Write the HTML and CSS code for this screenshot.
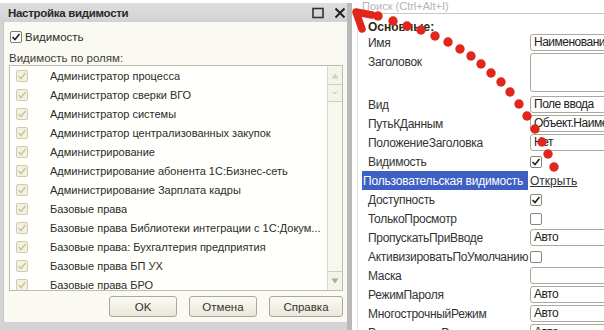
FILE: index.html
```html
<!DOCTYPE html>
<html lang="ru">
<head>
<meta charset="utf-8">
<link rel="stylesheet" href="styles.css">
</head>
<body>
<div class="screen">
  <div class="dialog">
    <div class="titlebar">
      <span class="title">Настройка видимости</span>
      <span class="tb-icons">
        <svg class="tb-ico" width="12" height="12" viewBox="0 0 12 12"><rect x="1" y="1.5" width="10" height="9" fill="none" stroke="#333" stroke-width="1.6"/></svg>
        <svg class="tb-ico" width="12" height="12" viewBox="0 0 12 12"><path d="M1.5 1.5 L10.5 10.5 M10.5 1.5 L1.5 10.5" stroke="#222" stroke-width="2"/></svg>
      </span>
    </div>
    <div class="dbody">
      <div class="chk-row">
        <span class="cb on"><svg width="10" height="10" viewBox="0 0 10 10"><path d="M1.5 5 L4 7.5 L8.5 2" fill="none" stroke="#222" stroke-width="1.6"/></svg></span>
        <span>Видимость</span>
      </div>
      <div class="caption">Видимость по ролям:</div>
      <div class="listbox">
        <div class="rows">
          <div class="row"><span class="cb dis"><svg width="10" height="10" viewBox="0 0 10 10"><path d="M1.5 5 L4 7.5 L8.5 2" fill="none" stroke="#cdc7a0" stroke-width="1.6"/></svg></span><span class="rt">Администратор процесса</span></div>
          <div class="row"><span class="cb dis"><svg width="10" height="10" viewBox="0 0 10 10"><path d="M1.5 5 L4 7.5 L8.5 2" fill="none" stroke="#cdc7a0" stroke-width="1.6"/></svg></span><span class="rt">Администратор сверки ВГО</span></div>
          <div class="row"><span class="cb dis"><svg width="10" height="10" viewBox="0 0 10 10"><path d="M1.5 5 L4 7.5 L8.5 2" fill="none" stroke="#cdc7a0" stroke-width="1.6"/></svg></span><span class="rt">Администратор системы</span></div>
          <div class="row"><span class="cb dis"><svg width="10" height="10" viewBox="0 0 10 10"><path d="M1.5 5 L4 7.5 L8.5 2" fill="none" stroke="#cdc7a0" stroke-width="1.6"/></svg></span><span class="rt">Администратор централизованных закупок</span></div>
          <div class="row"><span class="cb dis"><svg width="10" height="10" viewBox="0 0 10 10"><path d="M1.5 5 L4 7.5 L8.5 2" fill="none" stroke="#cdc7a0" stroke-width="1.6"/></svg></span><span class="rt">Администрирование</span></div>
          <div class="row"><span class="cb dis"><svg width="10" height="10" viewBox="0 0 10 10"><path d="M1.5 5 L4 7.5 L8.5 2" fill="none" stroke="#cdc7a0" stroke-width="1.6"/></svg></span><span class="rt">Администрирование абонента 1С:Бизнес-сеть</span></div>
          <div class="row"><span class="cb dis"><svg width="10" height="10" viewBox="0 0 10 10"><path d="M1.5 5 L4 7.5 L8.5 2" fill="none" stroke="#cdc7a0" stroke-width="1.6"/></svg></span><span class="rt">Администрирование Зарплата кадры</span></div>
          <div class="row"><span class="cb dis"><svg width="10" height="10" viewBox="0 0 10 10"><path d="M1.5 5 L4 7.5 L8.5 2" fill="none" stroke="#cdc7a0" stroke-width="1.6"/></svg></span><span class="rt">Базовые права</span></div>
          <div class="row"><span class="cb dis"><svg width="10" height="10" viewBox="0 0 10 10"><path d="M1.5 5 L4 7.5 L8.5 2" fill="none" stroke="#cdc7a0" stroke-width="1.6"/></svg></span><span class="rt">Базовые права Библиотеки интеграции с 1С:Докум...</span></div>
          <div class="row"><span class="cb dis"><svg width="10" height="10" viewBox="0 0 10 10"><path d="M1.5 5 L4 7.5 L8.5 2" fill="none" stroke="#cdc7a0" stroke-width="1.6"/></svg></span><span class="rt">Базовые права: Бухгалтерия предприятия</span></div>
          <div class="row"><span class="cb dis"><svg width="10" height="10" viewBox="0 0 10 10"><path d="M1.5 5 L4 7.5 L8.5 2" fill="none" stroke="#cdc7a0" stroke-width="1.6"/></svg></span><span class="rt">Базовые права БП УХ</span></div>
          <div class="row"><span class="cb dis"><svg width="10" height="10" viewBox="0 0 10 10"><path d="M1.5 5 L4 7.5 L8.5 2" fill="none" stroke="#cdc7a0" stroke-width="1.6"/></svg></span><span class="rt">Базовые права БРО</span></div>
        </div>
        <div class="scrollbar">
          <div class="sb-btn"><svg width="8" height="6" viewBox="0 0 8 6"><path d="M4 0.5 L7.5 5.5 L0.5 5.5 Z" fill="#cfcfc4"/></svg></div>
          <div class="sb-thumb"><svg width="6" height="4" viewBox="0 0 6 4"><path d="M0 1 L6 1 L3 3.5 Z" fill="#d6d6cc"/></svg></div>
          <div class="sb-track"></div>
          <div class="sb-btn"><svg width="8" height="6" viewBox="0 0 8 6"><path d="M0.5 0.5 L7.5 0.5 L4 5.5 Z" fill="#a9a9a0"/></svg></div>
        </div>
      </div>
      <div class="buttons">
        <div class="btn w68">OK</div>
        <div class="btn w68">Отмена</div>
        <div class="btn w74">Справка</div>
      </div>
    </div>
  </div>

  <div class="props">
    <div class="search">Поиск (Ctrl+Alt+I)</div>
    <div class="grid">
      <div class="lbl group">Основные:</div><div class="val"></div>
      <div class="lbl">Имя</div><div class="val"><div class="inp">Наименование</div></div>
      <div class="lbl top">Заголовок</div><div class="val top"><div class="inp area"></div></div>
      <div class="lbl">Вид</div><div class="val"><div class="inp">Поле ввода</div></div>
      <div class="lbl">ПутьКДанным</div><div class="val"><div class="inp">Объект.Наименование</div></div>
      <div class="lbl">ПоложениеЗаголовка</div><div class="val"><div class="inp">Нет</div></div>
      <div class="lbl">Видимость</div><div class="val"><span class="cb2"><svg width="10" height="10" viewBox="0 0 10 10"><path d="M1.5 5 L4 7.5 L8.5 2" fill="none" stroke="#222" stroke-width="1.6"/></svg></span></div>
      <div class="lbl sel">Пользовательская видимость</div><div class="val"><span class="link">Открыть</span></div>
      <div class="lbl">Доступность</div><div class="val"><span class="cb2"><svg width="10" height="10" viewBox="0 0 10 10"><path d="M1.5 5 L4 7.5 L8.5 2" fill="none" stroke="#222" stroke-width="1.6"/></svg></span></div>
      <div class="lbl">ТолькоПросмотр</div><div class="val"><span class="cb2"></span></div>
      <div class="lbl">ПропускатьПриВводе</div><div class="val"><div class="inp">Авто</div></div>
      <div class="lbl">АктивизироватьПоУмолчанию</div><div class="val"><span class="cb2"></span></div>
      <div class="lbl">Маска</div><div class="val"><div class="inp"></div></div>
      <div class="lbl">РежимПароля</div><div class="val"><div class="inp">Авто</div></div>
      <div class="lbl">МногострочныйРежим</div><div class="val"><div class="inp">Авто</div></div>
      <div class="lbl">РасширенноеРедактирование</div><div class="val"><div class="inp">Авто</div></div>
    </div>
  </div>

  <svg class="arrow" width="604" height="330" viewBox="0 0 604 330">
    <g fill="#e1261c">
      <circle cx="378" cy="16" r="4.7"/>
      <circle cx="393" cy="21" r="4.7"/>
      <circle cx="407" cy="26" r="4.7"/>
      <circle cx="421" cy="30" r="4.7"/>
      <circle cx="435" cy="36" r="4.7"/>
      <circle cx="448" cy="42" r="4.7"/>
      <circle cx="460" cy="49" r="4.7"/>
      <circle cx="471" cy="56" r="4.7"/>
      <circle cx="481" cy="64" r="4.7"/>
      <circle cx="491" cy="73" r="4.7"/>
      <circle cx="501" cy="82" r="4.7"/>
      <circle cx="510" cy="92" r="4.7"/>
      <circle cx="519" cy="104" r="4.7"/>
      <circle cx="527" cy="116" r="4.7"/>
      <circle cx="535" cy="129" r="4.7"/>
      <circle cx="542" cy="142" r="4.7"/>
      <circle cx="548" cy="154" r="4.7"/>
      <circle cx="554" cy="167" r="4.7"/>
    </g>
    <polyline points="372,15 356,12 362,29" fill="none" stroke="#e1261c" stroke-width="7.5" stroke-linejoin="round" stroke-linecap="round"/>
  </svg>
</div>
</body>
</html>
```

FILE: styles.css
```css
* { box-sizing: border-box; }
html, body { margin: 0; padding: 0; }
body {
  width: 604px;
  height: 330px;
  overflow: hidden;
  background: #ffffff;
  font-family: "Liberation Sans", Arial, sans-serif;
  font-size: 12px;
  color: #333;
}
.screen {
  position: relative;
  width: 604px;
  height: 330px;
  display: flex;
  overflow: hidden;
}

/* ---------- dialog ---------- */
.dialog {
  flex: 0 0 352px;
  height: 327px;
  margin-top: 3px;
  background: #d4d4d4;
  border-right: 5px solid #b9b9b9;
  display: flex;
  flex-direction: column;
  padding-left: 3px;
  font-size: 11px;
}
.titlebar {
  height: 19px;
  margin-left: -3px;
  padding-left: 8px;
  padding-top: 1px;
  display: flex;
  align-items: center;
  justify-content: space-between;
  background: linear-gradient(#dedede, #d2d2d2);
}
.title {
  font-weight: bold;
  font-size: 11.5px;
  letter-spacing: -0.3px;
  color: #2a2a2a;
}
.tb-icons {
  display: flex;
  gap: 10px;
  padding-right: 1px;
}
.tb-ico { display: block; }

.dbody {
  width: 344px;
  height: 300px;
  background: #fbfaf2;
  border-left: 1px solid #c4c4c4;
  padding: 0 4px 0 5px;
  display: flex;
  flex-direction: column;
}
.chk-row {
  margin-top: 8px;
  height: 14px;
  display: flex;
  align-items: center;
  gap: 3px;
  padding-left: 1px;
  color: #2c2c2c;
  font-size: 11.5px;
}
.cb {
  width: 12px;
  height: 12px;
  border-radius: 2px;
  display: flex;
  align-items: center;
  justify-content: center;
  flex: 0 0 12px;
}
.cb.on {
  border: 1px solid #7e7e74;
  background: #fff;
}
.cb.dis {
  border: 1px solid #cfcab0;
  background: #f3f1e2;
}
.caption {
  margin-top: 7px;
  height: 14px;
  line-height: 15px;
  color: #3c3c3c;
  font-size: 11.5px;
}
.listbox {
  height: 226px;
  border: 1px solid #bdbcae;
  background: #fffffb;
  display: flex;
  overflow: hidden;
}
.rows {
  flex: 1;
  min-width: 0;
  overflow: hidden;
}
.row {
  height: 19px;
  display: flex;
  align-items: center;
  padding-left: 6px;
  white-space: nowrap;
}
.rt {
  margin-left: 22px;
  color: #2c2c2c;
  overflow: hidden;
  text-overflow: ellipsis;
}
.scrollbar {
  width: 15px;
  flex: 0 0 15px;
  border-left: 1px solid #d8d7cc;
  background: #f7f6ef;
  display: flex;
  flex-direction: column;
  padding-top: 1px;
}
.sb-btn, .sb-thumb {
  height: 18px;
  display: flex;
  align-items: center;
  justify-content: center;
  border-bottom: 1px solid #cfcec4;
  background: #f4f3ea;
}
.sb-thumb { height: 17px; }
.sb-track { flex: 1; border-bottom: 1px solid #cfcec4; }
.sb-btn:last-child { border-bottom: none; }

.buttons {
  margin-top: 5px;
  height: 21px;
  display: flex;
  justify-content: flex-end;
  gap: 12px;
}
.btn {
  height: 21px;
  border: 1px solid #a9a89c;
  border-radius: 3px;
  background: linear-gradient(#fbfaf4, #e9e7da);
  display: flex;
  align-items: center;
  justify-content: center;
  color: #333;
  font-size: 11.5px;
}
.w68 { width: 68px; }
.w74 { width: 74px; }

/* ---------- properties panel ---------- */
.props {
  flex: 1;
  background: #ffffff;
  display: flex;
  flex-direction: column;
  padding-left: 5px;
}
.search {
  height: 16px;
  line-height: 13px;
  padding-left: 10px;
  color: #b4b4b4;
  border-bottom: 1px solid #c8c8bc;
  margin-left: -5px;
  font-size: 11px;
}
.grid {
  display: grid;
  grid-template-columns: 166px 1fr;
  grid-template-rows: 19px 19px 43px;
  grid-auto-rows: 19px;
  column-gap: 2px;
  border-left: 1px solid #e2e2da;
  padding-left: 4px;
  background: #fff;
}
.lbl {
  padding-left: 6px;
  display: flex;
  align-items: center;
  white-space: nowrap;
  color: #333;
  letter-spacing: -0.3px;
}
.lbl.group {
  font-weight: bold;
  color: #2c2a14;
  padding-top: 7px;
  letter-spacing: 0;
}
.lbl.sel {
  background: #3e5fc3;
  color: #fff;
  padding-left: 1px;
  letter-spacing: -0.2px;
}
.lbl.top { align-items: flex-start; padding-top: 3px; }
.val {
  display: flex;
  align-items: center;
  overflow: visible;
  white-space: nowrap;
}
.val.top { align-items: flex-start; padding-top: 1px; }
.inp {
  width: 110px;
  height: 17px;
  border: 1px solid #aaa99c;
  border-radius: 3px;
  background: #fff;
  padding-left: 3px;
  line-height: 15px;
  color: #222;
  overflow: hidden;
  flex: 0 0 auto;
  letter-spacing: -0.5px;
}
.inp.area { height: 39px; }
.cb2 {
  width: 12px;
  height: 12px;
  border: 1px solid #86857a;
  border-radius: 2px;
  background: #fff;
  display: flex;
  align-items: center;
  justify-content: center;
}
.link {
  color: #333;
  text-decoration: underline;
}

.arrow {
  position: absolute;
  left: 0;
  top: 0;
  pointer-events: none;
}
```
